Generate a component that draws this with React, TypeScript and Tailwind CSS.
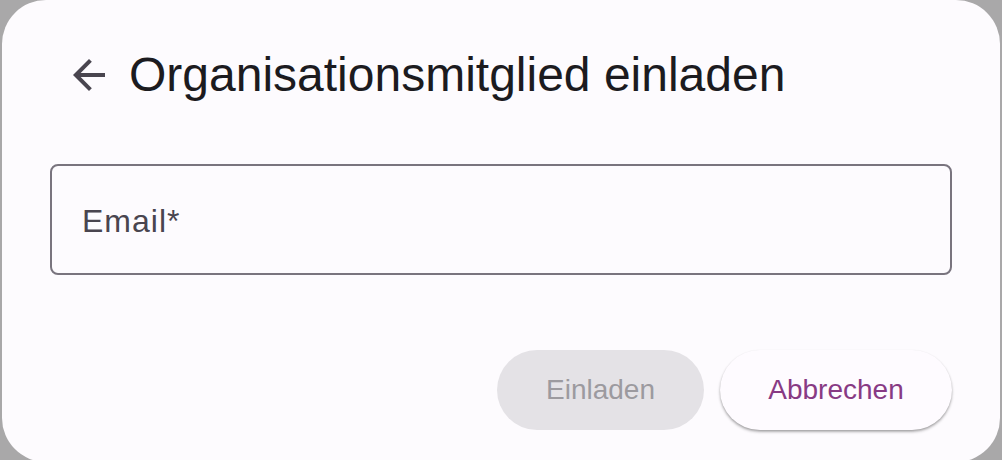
import React from 'react';

function ArrowBack() {
  return (
    <svg width="48" height="48" viewBox="0 0 24 24" fill="#49454f" aria-hidden="true">
      <path d="M20 11H7.83l5.59-5.59L12 4l-8 8 8 8 1.41-1.41L7.83 13H20v-2z" />
    </svg>
  );
}

export default function App() {
  return (
    <div
      className="w-[1002px] h-[460px] overflow-hidden bg-[#a9a8a9] px-[2px]"
      style={{ fontFamily: '"Liberation Sans", Arial, sans-serif' }}
    >
      <div className="h-[462px] rounded-[44px] bg-[#fdfbfe] px-[48px] pt-[43px]">
        {/* Header */}
        <div className="flex h-[64px] items-center gap-4 pl-[15px]">
          <button className="flex h-[48px] w-[48px] items-center justify-center">
            <ArrowBack />
          </button>
          <h1 className="text-[48px] leading-[64px] font-normal text-[#1c1b1f]">
            Organisationsmitglied einladen
          </h1>
        </div>

        {/* Email field */}
        <div className="mt-[57px] flex h-[111px] items-center rounded-[8px] border-2 border-[#79747e] px-[30px]">
          <span className="pt-[3px] text-[32px] leading-[48px] tracking-[1px] text-[#49454f]">
            Email*
          </span>
        </div>

        {/* Actions */}
        <div className="mt-[75px] flex justify-end gap-4">
          <button
            disabled
            className="h-[80px] w-[207px] rounded-full bg-[#e4e2e6] text-[28px] text-[#9c9a9f]"
          >
            Einladen
          </button>
          <button className="h-[80px] w-[232px] rounded-full bg-[#fefbff] text-[28px] text-[#883a84] shadow-[0_2px_3px_rgba(0,0,0,0.28),0_1px_2px_rgba(0,0,0,0.12)]">
            Abbrechen
          </button>
        </div>
      </div>
    </div>
  );
}
